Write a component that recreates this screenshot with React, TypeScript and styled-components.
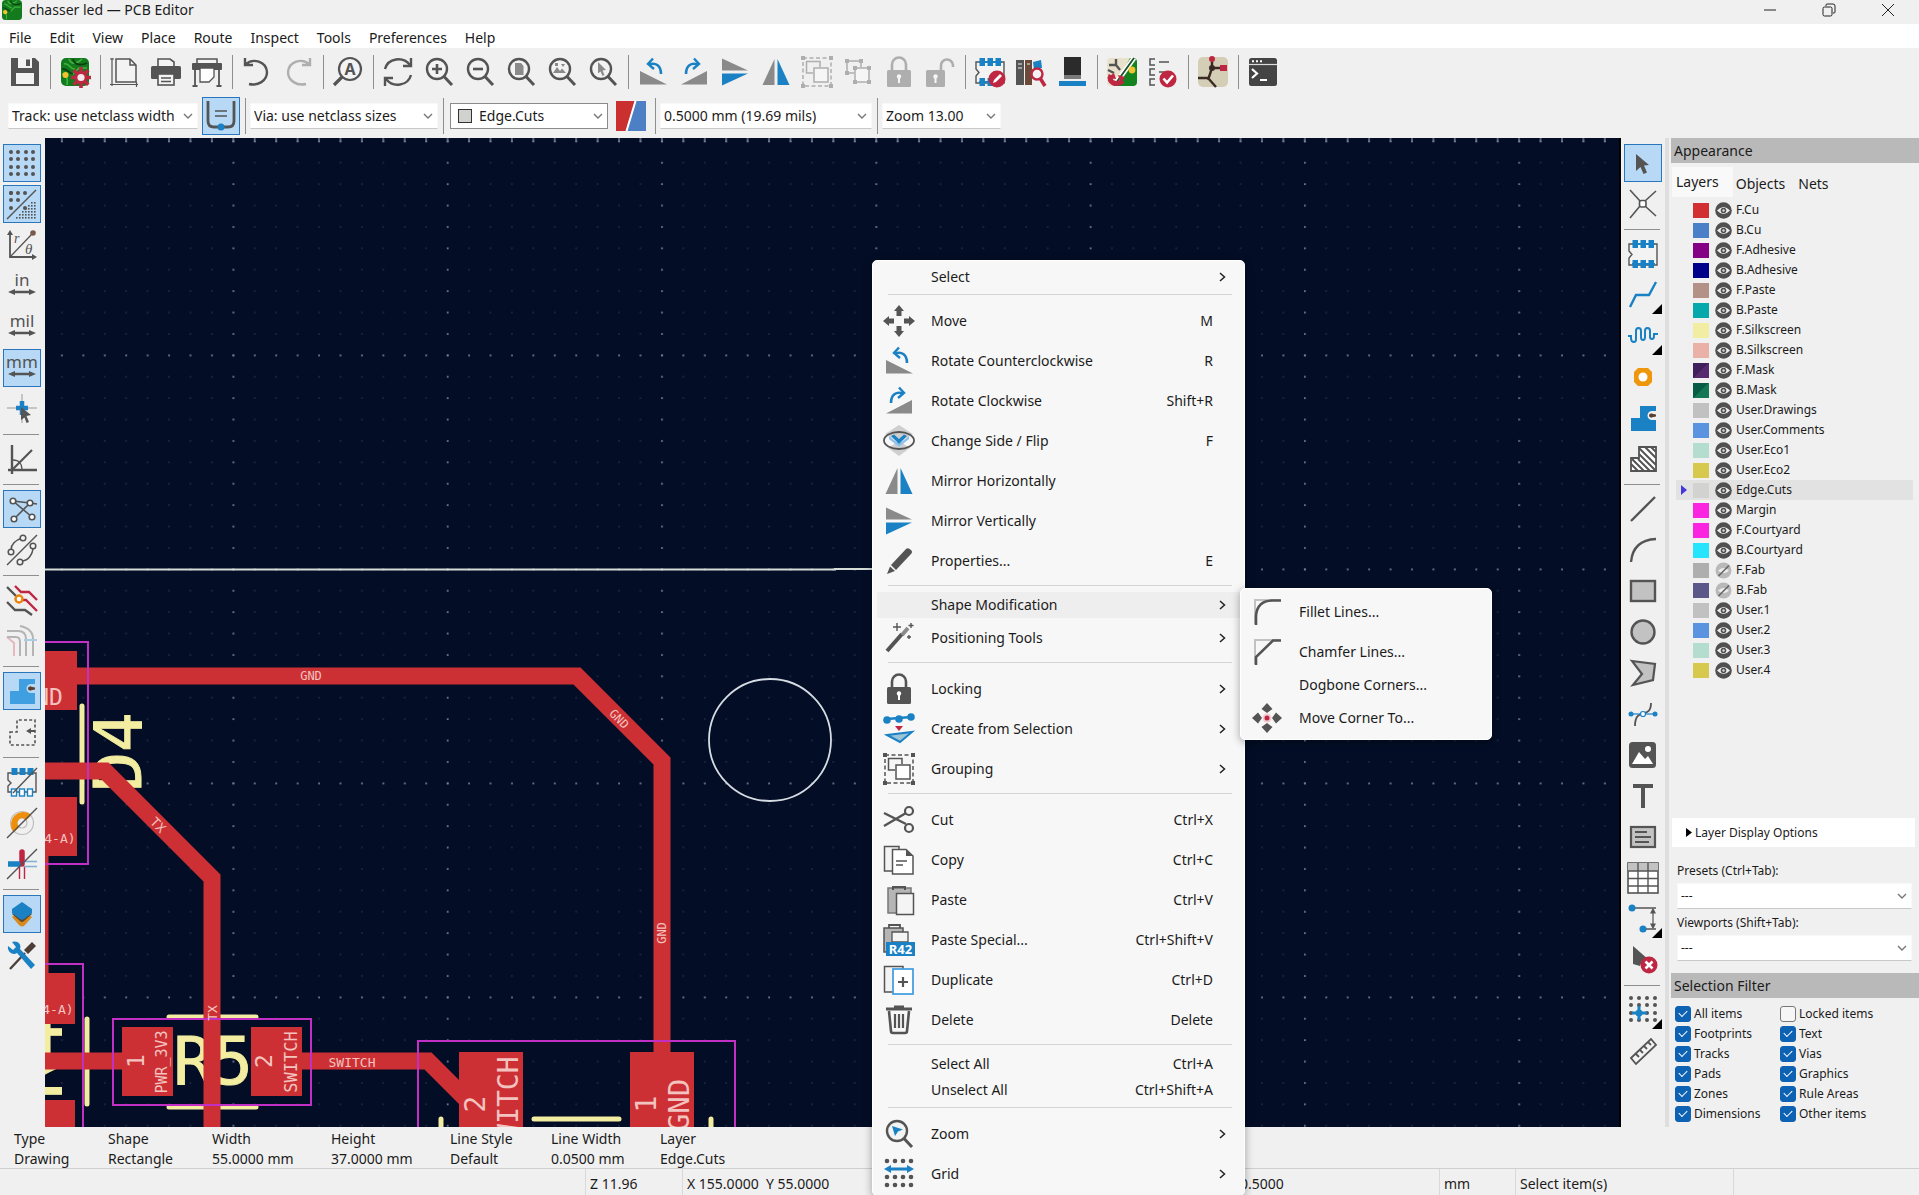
import React from "react";
import styled, { createGlobalStyle, css } from "styled-components";

const INK = "#545454";
const BLUE = "#1a81c4";
const RED = "#bf2641";
const PALE = "#f3f3f3";
const COPPER = "#cd3034";
const SILK = "#f2eda1";

const GlobalStyle = createGlobalStyle`
  *, *::before, *::after { box-sizing: border-box; }
  body { margin: 0; background: #f0f0f0; }
  button, select, input { font: inherit; color: inherit; margin: 0; }
  ul { list-style: none; margin: 0; padding: 0; }
`;

/* ---------- icons ---------- */

const lens = (inner: React.ReactNode) => (
  <g>
    <circle cx="14" cy="13" r="10" fill={PALE} stroke={INK} strokeWidth="2.4" />
    <path d="M21 20.5 L29 29" stroke={INK} strokeWidth="3" />
    {inner}
  </g>
);

const footprintBody = (
  <g>
    <path d="M2 6 H30 V27 H2 V20 L5 16.500 L2 13 Z" fill={PALE} stroke={INK} strokeWidth="1.4" />
    {[5.5, 13.5, 21.5].map((x) => (
      <g key={x} fill={BLUE}>
        <rect x={x} y="2" width="5.500" height="8" />
        <rect x={x} y="22" width="5.500" height="8" />
      </g>
    ))}
    <path d="M5 6 H28 M5 26 H28" stroke={BLUE} strokeWidth="2" />
  </g>
);

const padlock = (open: boolean) => (
  <g>
    <path
      d={open ? "M17 16 V10 a6 6 0 0 1 12 -1 v2" : "M9 16 V8.500 a7 7 0 0 1 14 0 V16"}
      fill="none"
      stroke={INK}
      strokeWidth="2.6"
    />
    <rect x={open ? 2 : 4} y="14" width={open ? 19 : 24} height="17" rx="1.500" fill={INK} />
    <circle cx={open ? 11.5 : 16} cy="20.500" r="2.200" fill="#fff" />
    <rect x={open ? 10.5 : 15} y="22" width="2" height="5" fill="#fff" />
  </g>
);

const cross4 = (
  <path
    d="M16 0 L21 6 H18.500 V11 H13.500 V6 H11 Z M16 32 L21 26 H18.500 V21 H13.500 V26 H11 Z M0 16 L6 11 V13.500 H11 V18.500 H6 V21 Z M32 16 L26 11 V13.500 H21 V18.500 H26 V21 Z"
    fill={INK}
  />
);

const dotGrid = (xs: number[], ys: number[], r = 2) =>
  ys.flatMap((y) => xs.map((x) => <circle key={`${x}-${y}`} cx={x} cy={y} r={r} fill={INK} />));

const doubleArrow = <path d="M2 22 L9 19 V20.800 H23 V19 L30 22 L23 25 V23.200 H9 V25 Z" fill={INK} />;

const unitIcon = (unit: string) => (
  <g>
    <text x="16" y="16" textAnchor="middle" fontFamily="Noto Sans, sans-serif" fontSize="17" fill={INK}>
      {unit}
    </text>
    {doubleArrow}
  </g>
);

const zoneShape = (fill: string) => (
  <g>
    <path d="M4 16 H13 V4 H29 V9 H25 a4.500 4.500 0 1 0 0 9 H29 V29 H4 Z" fill={fill} />
    <path d="M24 11.500 L29 12.500 V14.500 L24 15.500 Z" fill="#5b4030" />
    <circle cx="24" cy="13.500" r="2" fill="#5b4030" />
  </g>
);

const pagePair = (stroke: string) => (
  <g strokeWidth="1.500">
    <path d="M1.500 2.500 H16 V27 H1.500 Z" fill={PALE} stroke={INK} />
    <path d="M9.500 5.500 H23 L30 12 V30 H9.500 Z" fill="#fff" stroke={stroke} />
  </g>
);

const groupIcon = (
  <g fill="none" stroke={INK} strokeWidth="1.500">
    <path d="M2 2 H30 V30 H2 Z" strokeDasharray="4 2.500" />
    <path d="M12 17 H5.500 V5.500 H19 V11" />
    <rect x="13" y="12" width="14" height="14" fill="#fff" />
    {[0, 28].map((x) => [0, 28].map((y) => <rect key={`${x}${y}`} x={x} y={y} width="4" height="4" fill={INK} stroke="none" />))}
  </g>
);

const pcbTile = (
  <g>
    <rect x="2" y="2" width="28" height="28" rx="5" fill="#137a1d" />
    <path d="M5 8 C10 6 11 14 16 13 M10 3 C12 9 18 8 23 3 M3 18 C8 18 9 24 8 29 M13 19 L20 12 L28 12" fill="none" stroke="#3fb53c" strokeWidth="1.600" />
    <path d="M14 3 C15 9 22 10 28 7 M3 13 C8 12 11 18 14 18" fill="none" stroke="#0c3d12" strokeWidth="1.600" />
    <circle cx="6.500" cy="19" r="3" fill="#f2c230" />
  </g>
);

const ICONS: Record<string, React.ReactNode> = {
  save: (
    <g>
      <path d="M2 2 H26 L30 6 V30 H2 Z" fill={INK} />
      <rect x="9" y="2" width="14" height="10" fill={PALE} />
      <rect x="17" y="3.500" width="4" height="6.500" fill={INK} />
      <rect x="7" y="17" width="18" height="11" fill={PALE} />
    </g>
  ),
  board: (
    <g>
      {pcbTile}
      <path
        d="M22 11 V32 M12 21.500 H32 M14.700 14.200 L29.300 28.800 M29.300 14.200 L14.700 28.800"
        stroke={RED}
        strokeWidth="3.600"
      />
      <circle cx="22" cy="21.500" r="6.500" fill={RED} />
      <circle cx="22" cy="21.500" r="3.600" fill="#f4e8ea" />
    </g>
  ),
  page: (
    <g>
      <path d="M7 3 H21 L27 9 V26 H7 Z" fill={PALE} stroke={INK} strokeWidth="1.500" />
      <path d="M21 3 V9 H27" fill="none" stroke={INK} strokeWidth="1.500" />
      <path d="M3 2 V30 M1 28.500 H29 M1 3 H5 M27.500 26 V31" stroke={INK} strokeWidth="1.200" />
    </g>
  ),
  print: (
    <g>
      <path d="M8 10 V3 H20 L24 6 V10" fill={PALE} stroke={INK} strokeWidth="1.600" />
      <rect x="1" y="10" width="30" height="13" rx="1.500" fill={INK} />
      <rect x="8" y="18" width="16" height="11" fill={PALE} stroke={INK} strokeWidth="1.600" />
      <path d="M11 22 H21 M11 25.500 H21" stroke={INK} strokeWidth="1.300" />
    </g>
  ),
  plot: (
    <g>
      <path d="M6 8 V3 H26 V8" fill={PALE} stroke={INK} strokeWidth="1.500" />
      <rect x="1" y="7" width="30" height="7" rx="1" fill={INK} />
      <path d="M4 14 V30 M28 14 V30 M1.500 30 H6.500 M25.500 30 H30.500" stroke={INK} strokeWidth="1.800" />
      <path d="M9 12 H23 V21 L18 26 H9 Z" fill="#fff" stroke={INK} strokeWidth="1.300" />
    </g>
  ),
  undo: (
    <path d="M4 2 V9 H12 M5 8 C12 2 25 5 26 16 C26 25 17 30 8 28" fill="none" stroke={INK} strokeWidth="2.400" />
  ),
  redo: (
    <path d="M28 2 V9 H20 M27 8 C20 2 7 5 6 16 C6 25 15 30 24 28" fill="none" stroke={INK} strokeWidth="2.400" />
  ),
  find: (
    <g>
      <circle cx="18" cy="13" r="11" fill={PALE} stroke={INK} strokeWidth="2.200" />
      <path d="M10 21 L2 29" stroke={INK} strokeWidth="3.200" />
      <text x="18" y="19" textAnchor="middle" fontFamily="Noto Sans, sans-serif" fontWeight="700" fontSize="16" fill={INK}>
        A
      </text>
    </g>
  ),
  refresh: (
    <g fill="none" stroke={INK} strokeWidth="2.400">
      <path d="M3 13 C6 2 21 0 28 9" />
      <path d="M29 2 V10 H21" />
      <path d="M29 19 C26 30 11 32 4 23" />
      <path d="M3 30 V22 H11" />
    </g>
  ),
  zoomIn: lens(<path d="M9 13 H19 M14 8 V18" stroke={INK} strokeWidth="2.600" />),
  zoomOut: lens(<path d="M9 13 H19" stroke={INK} strokeWidth="2.600" />),
  zoomPage: lens(<path d="M10 7 H16 L18.500 10 V19 H10 Z" fill="#8a8a8a" />),
  zoomObjects: lens(<path d="M7 17 L11 11 L14 15 L16 12.500 L20 17 Z M9 7 h3 v3 h-3 Z M15 8 l4 0 l-2 3 Z" fill="#8a8a8a" />),
  zoomSelection: lens(<path d="M11 6 L19 14 L15.500 14.500 L17.500 19 L15.500 20 L13.500 15.500 L11 17.500 Z" fill="#8a8a8a" />),
  zoomMenu: lens(<path d="M9 8 L20 11.500 L15 13.500 L12 18 Z" fill={BLUE} />),
  rotateCcw: (
    <g>
      <path d="M3 15 L30 28.500 H3 Z" fill="#8a8a8a" />
      <path d="M12 8.500 C19 6 24 10 24 18" fill="none" stroke={BLUE} strokeWidth="2.600" />
      <path d="M16 2.500 L11 8 L17 13" fill="none" stroke={BLUE} strokeWidth="2.400" />
    </g>
  ),
  rotateCw: (
    <g>
      <path d="M29 15 L3 28.500 H29 Z" fill="#8a8a8a" />
      <path d="M20 8.500 C13 6 8 10 8 18" fill="none" stroke={BLUE} strokeWidth="2.600" />
      <path d="M16 2.500 L21 8 L15 13" fill="none" stroke={BLUE} strokeWidth="2.400" />
    </g>
  ),
  mirrorV: (
    <g>
      <path d="M3 2.500 L29 14.500 H3 Z" fill="#8a8a8a" />
      <path d="M3 17.500 H29 L3 29.500 Z" fill={BLUE} />
    </g>
  ),
  mirrorH: (
    <g>
      <path d="M14.500 3 V29 H2.500 Z" fill="#8a8a8a" />
      <path d="M17.500 3 V29 H29.500 Z" fill={BLUE} />
    </g>
  ),
  group: groupIcon,
  ungroup: (
    <g fill="none" stroke={INK} strokeWidth="1.500">
      <path d="M12 17 H5 V5 H19 V11" />
      <rect x="13" y="12" width="14" height="14" fill="#fff" />
      {[[3, 3], [17, 3], [3, 15], [11, 10], [25, 10], [11, 24], [25, 24]].map(([x, y]) => (
        <rect key={`${x}${y}`} x={x} y={y} width="4" height="4" fill={INK} stroke="none" />
      ))}
    </g>
  ),
  lock: padlock(false),
  unlock: padlock(true),
  footprintEdit: (
    <g>
      {footprintBody}
      <circle cx="23" cy="23" r="8.500" fill={RED} />
      <path d="M19 27 L20 24 L26 18 L28 20 L22 26 Z" fill="#fff" />
    </g>
  ),
  library: (
    <g>
      <rect x="1" y="4" width="8" height="25" fill={INK} />
      <rect x="10" y="4" width="7" height="25" fill="#6b4a3a" />
      <path d="M3 8 H7 M12 8 H15 M3 12 H7" stroke="#bbb" strokeWidth="1.500" />
      <path d="M18 6 L26 4 L27 12 L19 14 Z" fill={BLUE} />
      <circle cx="22" cy="18" r="5.500" fill={PALE} stroke={RED} strokeWidth="2.400" />
      <path d="M25 22 L30 30" stroke={RED} strokeWidth="3.500" />
    </g>
  ),
  viewer3d: (
    <g>
      <rect x="8" y="1" width="17" height="22" fill="#2b2b2b" />
      <rect x="8" y="19" width="17" height="4" fill="#7a7a7a" />
      <rect x="3" y="25" width="27" height="5" fill={BLUE} />
    </g>
  ),
  updateBoard: (
    <g>
      <rect x="1" y="2" width="30" height="28" rx="4" fill="#e8e2cc" />
      <path d="M24 2 H27 a4 4 0 0 1 4 4 V26 a4 4 0 0 1 -4 4 H9 Z" fill="#13831f" />
      <path d="M3 9 H10 V3 M10 9 L14 14 M2 14 L8 17" stroke={INK} strokeWidth="2.400" fill="none" />
      <path d="M28 2 L10 27" stroke="#fff" strokeWidth="5" />
      <path d="M28 2 L10 27" stroke="#1b4f25" strokeWidth="1.800" />
      <circle cx="26" cy="14" r="3.400" fill="#f2c230" />
      <path d="M5 19 C2 27 10 30 17 25" fill="none" stroke={RED} strokeWidth="5" />
      <path d="M12 19 L19 21 L15 28 Z M1 22 L8 17 L10 23 Z" fill={RED} />
    </g>
  ),
  drc: (
    <g>
      <path d="M8 3 H3 V9 H8 M8 13 H3 V19 H8 M8 23 H3 V29 H8" fill="none" stroke={INK} strokeWidth="1.500" />
      <path d="M12 6 H22 M12 16 H17" stroke={INK} strokeWidth="1.600" />
      <circle cx="21" cy="23" r="8.500" fill={RED} />
      <path d="M16.500 22.500 L20 26.500 L26 19.500" fill="none" stroke="#fff" strokeWidth="2.600" />
    </g>
  ),
  schematic: (
    <g>
      <rect x="1" y="1" width="30" height="30" rx="5" fill="#d3ceb5" />
      <path d="M15 1 V12 M15 12 H30 M15 12 L11 24 M1 22 H11 M11 22 L19 31" fill="none" stroke="#3a2a26" strokeWidth="2.400" />
      <circle cx="15" cy="12" r="3" fill="#3a2a26" />
      <circle cx="15" cy="3" r="3" fill={RED} />
      <rect x="23" y="9" width="7" height="6" fill={RED} />
    </g>
  ),
  console: (
    <g>
      <rect x="2" y="2" width="28" height="28" rx="2.500" fill="#444" />
      <path d="M2 8.500 H30" stroke="#ddd" strokeWidth="1.200" />
      <path d="M5 5.300 H7 M9 5.300 H11 M13 5.300 H15" stroke="#fff" strokeWidth="2" />
      <path d="M5 13 L10 17.500 L5 22 M13 24 H20" fill="none" stroke="#fff" strokeWidth="2.200" />
    </g>
  ),
  autoWidth: (
    <g>
      <path d="M3 1 V21 Q3 27 9 27 H23 Q29 27 29 21 V1" fill="none" stroke={INK} strokeWidth="2.800" />
      <path d="M10 11 H22 M10 16 H22" stroke={INK} strokeWidth="1.500" />
      <circle cx="16" cy="27" r="3.500" fill={BLUE} />
    </g>
  ),
  layerPair: (
    <g>
      <path d="M1 1 H20 L11 31 H1 Z" fill="#c9302f" />
      <path d="M21 1 H31 V31 H12 Z" fill="#4d7fc4" />
      <path d="M20.500 1 L11.500 31" stroke="#fff" strokeWidth="2" />
    </g>
  ),
  gridDots: <g>{dotGrid([5, 12, 20, 27], [5, 12, 20, 27])}</g>,
  gridOverride: (
    <g>
      {dotGrid([5, 12], [5, 12])}
      {dotGrid([19, 5], [5, 20])}
      <path d="M1 31 L30 2" stroke={INK} strokeWidth="1.400" />
      {[30, 27, 24, 21, 18, 15].map((y, row) =>
        [29, 26, 23, 20, 17, 14, 11].slice(0, 7 - row).map((x) => <rect key={`${x}-${y}`} x={x - 1} y={y - 1} width="1.600" height="1.600" fill={INK} />)
      )}
    </g>
  ),
  polar: (
    <g>
      <path d="M4 4 V28 H29" fill="none" stroke={INK} strokeWidth="1.800" />
      <path d="M4 1 L7 6 H1 Z M31 28 L26 25 V31 Z" fill={INK} />
      <path d="M4 28 L26 5" stroke={INK} strokeWidth="1.300" />
      <circle cx="27" cy="4" r="2.800" fill="#7a5a4c" />
      <text x="8" y="14" fontFamily="Liberation Serif, serif" fontSize="14" fontStyle="italic" fill={INK}>r</text>
      <text x="19" y="25" fontFamily="Liberation Serif, serif" fontSize="15" fontStyle="italic" fill={INK}>θ</text>
    </g>
  ),
  unitIn: unitIcon("in"),
  unitMil: unitIcon("mil"),
  unitMm: unitIcon("mm"),
  cursorCross: (
    <g>
      <path d="M1 15 H31 M16 1 V30" stroke="#9a9a9a" strokeWidth="1" />
      <path d="M10 15 H22 M16 8 V22" stroke={BLUE} strokeWidth="4.500" />
      <path d="M15 14 L25 22 L20.500 23 L23 29 L20.500 30 L18.500 24.500 L15 27 Z" fill={INK} />
    </g>
  ),
  angle: (
    <g fill="none" stroke={INK}>
      <path d="M6 2 V31 M2 27 H31" strokeWidth="2.400" />
      <path d="M6 27 L26 7" strokeWidth="2.200" />
      <path d="M7 17 C13 17 16 21 16 26" strokeWidth="1.400" />
    </g>
  ),
  ratsnest: (
    <g stroke={INK} strokeWidth="1.600">
      <path d="M7 8 L26 24 M8 26 L24 10 M7 8 L24 10 L31 11" fill="none" />
      {[[7, 8], [24, 10], [8, 26], [26, 24]].map(([x, y]) => <circle key={`${x}${y}`} cx={x} cy={y} r="2.800" fill="#fff" />)}
    </g>
  ),
  ratsnestCurved: (
    <g fill="none" stroke={INK} strokeWidth="1.500">
      <path d="M1 31 L31 1" />
      <path d="M5 16 C5 10 10 6 16 4 M14 27 C22 28 27 20 27 13" />
      {[[5, 18], [17, 4], [14, 28], [27, 12]].map(([x, y]) => <circle key={`${x}${y}`} cx={x} cy={y} r="2.800" fill={PALE} />)}
    </g>
  ),
  netColors: (
    <g fill="none" strokeWidth="2.400">
      <path d="M1 3 L10 12 M1 18 L9 26 H19 L26 31" stroke={INK} />
      <path d="M9 2 L15 8 H23 L31 16" stroke={RED} />
      <path d="M15 16 H20 L31 27" stroke={RED} />
      <circle cx="13" cy="15" r="3.500" fill="#fff" stroke="#e8870e" />
    </g>
  ),
  contrast: (
    <g fill="none" strokeWidth="2" stroke="#b4b4b4">
      <path d="M1 6 H12 C18 6 20 9 20 14 V31 M14 1 C24 3 27 8 27 14 V31" />
      <path d="M8 31 V18 L1 12" stroke="#e6b8c0" />
      <path d="M1 12 H10 C13 12 14 14 14 17 V31" />
      <path d="M18 15 H31" stroke="#a9cde4" />
    </g>
  ),
  zoneFilled: zoneShape("#3f9fe0"),
  zoneSolid: zoneShape(BLUE),
  zoneOutline: (
    <g>
      <path d="M4 16 H11 V4 H29 V29 H4 Z" fill="none" stroke={INK} strokeWidth="1.600" strokeDasharray="3 2.200" />
      <path d="M20 15 L25 12 V14 H29 V16 H25 V18 Z" fill={INK} />
    </g>
  ),
  padOutline: (
    <g>
      <path d="M2 7 H30 V26 H2 V20 L5 17 L2 14 Z" fill="none" stroke={INK} strokeWidth="1.400" />
      {[5.5, 13.5, 21.5].map((x) => (
        <g key={x}>
          <rect x={x} y="2" width="6" height="7" fill={BLUE} />
          <rect x={x} y="23" width="5" height="7" fill="#fff" stroke={BLUE} strokeWidth="1.400" />
        </g>
      ))}
      <path d="M7 27 L31 2" stroke={INK} strokeWidth="1.400" />
    </g>
  ),
  viaOutline: (
    <g>
      <circle cx="16" cy="16" r="11.500" fill="none" stroke="#bdbdbd" strokeWidth="1.200" />
      <circle cx="16" cy="16" r="5" fill="none" stroke="#bdbdbd" strokeWidth="1.200" />
      <path d="M8 24 A11.500 11.500 0 0 1 24 8 L20 12 A5.500 5.500 0 0 0 12 20 Z" fill="#ee8f0c" stroke="#ee8f0c" strokeWidth="2" />
      <path d="M1 31 L31 1" stroke={INK} strokeWidth="1.400" />
    </g>
  ),
  trackOutline: (
    <g>
      <path d="M16 4 V16" stroke={RED} strokeWidth="5.500" strokeLinecap="round" />
      <path d="M2 16 H14" stroke={BLUE} strokeWidth="5.500" />
      <path d="M13.500 18 V31 M18.500 18 V31" stroke={RED} strokeWidth="1.400" />
      <path d="M18 13.500 H31 M18 18.500 H31" stroke="#7fb0d0" strokeWidth="1.400" />
      <path d="M1 31 L31 1" stroke={INK} strokeWidth="1.400" />
    </g>
  ),
  layers: (
    <g>
      <path d="M16 12 L26 19 L19 27 Q16 30 13 27 L6 19 Z" fill="#d98a1c" />
      <path d="M16 9 L26 16 L18 23 Q16 25 14 23 L6 16 Z" fill="#5b4a30" />
      <path d="M16 4 L26 11 V15 L18 21 Q16 22.500 14 21 L6 15 V11 Z" fill={BLUE} />
    </g>
  ),
  tools: (
    <g>
      <path d="M4 30 L19 14" stroke="#4a4038" strokeWidth="2.400" />
      <path d="M18 11 L26 3 L30 7 L22 15 Z" fill="#4e3c36" />
      <path d="M2 7 L7 11 L10 8 L6 3 C11 1 16 5 14 10 L29 26 L25 30 L11 14 C6 17 1 12 2 7 Z" fill={BLUE} />
    </g>
  ),
  arrow: <path d="M9 7 L22 18 L17 18.500 L20 25.500 L16.500 27 L13.500 20 L9 24 Z" fill={INK} />,
  localRats: (
    <g stroke={INK} strokeWidth="1.600">
      <path d="M3 2 L13 13 M29 3 L18 13 M3 30 L13 18 M29 28 L18 18" />
      <rect x="12.500" y="12.500" width="6.500" height="6.500" rx="2" fill="#fff" />
    </g>
  ),
  footprint: footprintBody,
  route: <path d="M3 28 L9 16 H22 L29 3" fill="none" stroke={BLUE} strokeWidth="2.400" />,
  meander: (
    <path d="M1 16 H4 V18 Q4 22 7 22 Q9 22 9 19 V11 Q9 8 11.500 8 Q14 8 14 11 V17 Q14 20 16 20 Q18 20 18 17 V11 Q18 8 20.500 8 Q23 8 23 11 V17 Q23 19 25 19 Q27 19 27 16 V14 H31" fill="none" stroke={BLUE} strokeWidth="2" />
  ),
  via: (
    <g>
      <path d="M11 7 H21 L25 11 V21 L21 25 H11 L7 21 V11 Z" fill="#ee970c" />
      <circle cx="16" cy="16" r="4.500" fill="#fff" />
    </g>
  ),
  hatch: (
    <g>
      <path d="M4 15 H12 V4 H29 V28 H4 Z" fill="#fff" stroke={INK} strokeWidth="1.800" />
      <path d="M12 5 L29 22 M12 11 L28 27 M11 16 L23 28 M5 16 L17 28 M18 4 L29 15 M24 4 L29 9 M4 21 L11 28" stroke={INK} strokeWidth="2" />
    </g>
  ),
  line: <path d="M4 28 L28 4" stroke={INK} strokeWidth="2.400" />,
  arc: <path d="M4 28 Q6 6 29 5" fill="none" stroke={INK} strokeWidth="2.400" />,
  rect: <rect x="4" y="6" width="24" height="20" fill="#c2c2c2" stroke={INK} strokeWidth="2.400" />,
  circle: <circle cx="16" cy="16" r="11.500" fill="#c2c2c2" stroke={INK} strokeWidth="2.400" />,
  polygon: <path d="M5 4 L28 7 L26 23 L6 28 L15 17 Z" fill="#c2c2c2" stroke={INK} strokeWidth="2.200" />,
  bezier: (
    <g>
      <path d="M8 28 C8 8 24 22 24 5" fill="none" stroke={INK} strokeWidth="1.800" />
      <path d="M4 16 H28" stroke={BLUE} strokeWidth="1.200" />
      <circle cx="4" cy="16" r="2.500" fill={BLUE} />
      <circle cx="28" cy="16" r="2.500" fill={BLUE} />
      <circle cx="16" cy="16" r="2.500" fill="#fff" stroke={BLUE} strokeWidth="1.200" />
    </g>
  ),
  image: (
    <g>
      <rect x="2" y="3" width="27" height="26" rx="3.500" fill={INK} />
      <path d="M5 25 L12 13 L18 20 L21 17 L26 25 Z" fill="#fff" />
      <circle cx="21" cy="10" r="3" fill="#fff" />
    </g>
  ),
  text: <path d="M6 4 H26 V8 H18 V28 H14 V8 H6 Z" fill={INK} />,
  textbox: (
    <g>
      <rect x="4" y="6" width="24" height="20" fill="#c2c2c2" stroke={INK} strokeWidth="2.200" />
      <path d="M8 11 H20 M8 16 H24 M8 21 H22" stroke={INK} strokeWidth="1.800" />
    </g>
  ),
  table: (
    <g>
      <rect x="1" y="1" width="30" height="30" fill="#fff" stroke={INK} strokeWidth="1.600" />
      <rect x="1" y="1" width="30" height="8" fill="#c2c2c2" />
      <path d="M1 9 H31 M1 16.500 H31 M1 24 H31 M11 1 V31 M21 1 V31" stroke={INK} strokeWidth="1.400" />
    </g>
  ),
  dimension: (
    <g>
      <path d="M5 5 H29 M16 26 H29" stroke={INK} strokeWidth="1.400" />
      <path d="M26 6 V25 M26 6 l-2 4 h4 Z M26 25 l-2 -4 h4 Z" stroke={INK} fill={INK} strokeWidth="1.200" />
      <circle cx="5" cy="5" r="3.500" fill={BLUE} />
      <circle cx="16" cy="26" r="3.500" fill={BLUE} />
    </g>
  ),
  deleteTool: (
    <g>
      <path d="M6 2 L22 16 L15 17 L13 22 L6 20 Z" fill={INK} />
      <circle cx="22" cy="21" r="8.500" fill={RED} />
      <path d="M18.500 17.500 L25.500 24.500 M25.500 17.500 L18.500 24.500" stroke="#fff" strokeWidth="2.600" />
    </g>
  ),
  gridOrigin: (
    <g>
      {dotGrid([4, 12, 20, 28], [4, 11, 19, 26], 2)}
      <path d="M5 19 H20 M12 12 V26" stroke={BLUE} strokeWidth="3" />
      <circle cx="12" cy="19" r="3.500" fill={BLUE} />
    </g>
  ),
  ruler: (
    <path d="M4 23 L24 4 L29 10 L9 29 Z M9 19 l3 3 M13 15 l3 3 M17 11 l3 3 M21 7 l3 3" fill={PALE} stroke={INK} strokeWidth="1.800" />
  ),
  move: cross4,
  moveCorner: (
    <g>
      <path d="M16 1 L21.500 7 L16 11 L10.500 7 Z M16 31 L21.500 25 L16 21 L10.500 25 Z M1 16 L7 10.500 L11 16 L7 21.500 Z M31 16 L25 10.500 L21 16 L25 21.500 Z" fill={INK} />
      <circle cx="16" cy="16" r="4.500" fill="#f3ccd4" />
      <circle cx="16" cy="16" r="2.500" fill={RED} />
    </g>
  ),
  flip: (
    <g>
      <path d="M16 0 L30 9 L16 17 L2 9 Z" fill="#cfcfcf" />
      <path d="M16 16 L27 23 L16 31 L5 23 Z" fill="#cfcfcf" />
      <ellipse cx="16" cy="15.500" rx="15" ry="8.500" fill="none" stroke={INK} strokeWidth="1.800" />
      <path d="M6 11 L16 19 L26 11 V14 L16 22 L6 14 Z" fill="#8fc0ea" />
      <path d="M8 11 L11 9.500 L16 14 L21 9.500 L24 11 L16 19 Z" fill={BLUE} />
    </g>
  ),
  pencil: (
    <g>
      <path d="M8 20 L23 4 Q25 2 28 5 Q30 7 28 9 L13 25 Z" fill={INK} />
      <path d="M7 21.500 L12 26 L4 29 Z" fill={INK} />
    </g>
  ),
  wand: (
    <g>
      <path d="M4 29 L19 12" stroke={INK} strokeWidth="4" />
      <path d="M19 13 L25 6" stroke="#8a8a8a" strokeWidth="4" />
      <path d="M14 1 V9 M10 5 H18 M28 1 V6 M25.500 3.500 H30.500 M26 13 V17 M24 15 H28" stroke={INK} strokeWidth="1.400" />
    </g>
  ),
  create: (
    <g>
      <path d="M4 6 L16 5 L28 4" stroke={BLUE} strokeWidth="2.400" />
      {[[4, 7], [16, 6], [28, 4]].map(([x, y]) => <circle key={x} cx={x} cy={y} r="3.800" fill={BLUE} />)}
      <path d="M12 13 H20 L16 18 Z" fill={RED} />
      <path d="M4 22 L29 19 L17 29 Z" fill="#9cc4d8" stroke={BLUE} strokeWidth="2" />
    </g>
  ),
  cut: (
    <g fill="none" stroke={INK}>
      <path d="M1 9 L23 20 M1 22 L23 9" strokeWidth="2.400" />
      <circle cx="26" cy="7" r="4" strokeWidth="2.200" />
      <circle cx="26" cy="24" r="4" strokeWidth="2.200" />
    </g>
  ),
  copy: (
    <g>
      {pagePair(INK)}
      <path d="M23 5 L30 12 H23 Z" fill={INK} />
      <path d="M13 17 H24 M13 21 H20" stroke={INK} strokeWidth="1.500" />
    </g>
  ),
  paste: (
    <g>
      <rect x="5" y="4" width="23" height="25" fill="#b5b5b5" stroke="#777" strokeWidth="1.500" />
      <path d="M10 6 V3 H22 V6" fill="none" stroke={INK} strokeWidth="2" />
      <rect x="13.500" y="9.500" width="17" height="21" fill="#f4f4f4" stroke={INK} strokeWidth="1.500" />
    </g>
  ),
  pasteSpecial: (
    <g>
      <path d="M1 4 H20 V28 H1 Z" fill="#b5b5b5" stroke={INK} strokeWidth="1.500" />
      <path d="M6 4 V1 H17 V4" fill="none" stroke={INK} strokeWidth="1.800" />
      <path d="M9 8 H25 V18 H9 Z" fill="#f4f4f4" stroke={INK} strokeWidth="1.300" />
      <rect x="3" y="18" width="29" height="14" fill={BLUE} />
      <text x="17.500" y="29.500" textAnchor="middle" fontFamily="Noto Sans, sans-serif" fontWeight="700" fontSize="13" fill="#fff">R42</text>
    </g>
  ),
  duplicate: (
    <g>
      <path d="M1.500 2.500 H20 V28 H1.500 Z" fill={PALE} stroke={INK} strokeWidth="1.500" />
      <rect x="10" y="5" width="20" height="25" fill="#fff" stroke="#3d9be0" strokeWidth="1.700" />
      <path d="M15 18 H25 M20 13 V23" stroke={INK} strokeWidth="2.200" />
    </g>
  ),
  trash: (
    <g fill="none" stroke={INK}>
      <path d="M3 5 H29" strokeWidth="3" />
      <path d="M11 3 H21" strokeWidth="3" />
      <path d="M6 7 L8 27 Q8 29 10 29 H22 Q24 29 24 27 L26 7" strokeWidth="2.600" />
      <path d="M12 10 V24 M16 10 V24 M20 10 V24" strokeWidth="2.200" />
    </g>
  ),
  gridMenu: (
    <g>
      {dotGrid([4, 12, 20, 28], [3, 19, 27], 2.3)}
      <path d="M1 11 L8 7 V9.500 H24 V7 L31 11 L24 15 V12.500 H8 V15 Z" fill={BLUE} />
    </g>
  ),
  fillet: (
    <g fill="none">
      <path d="M4 28 V4 H29" stroke="#c2c2c2" strokeWidth="2" />
      <path d="M5 29 V20 Q6 5 21 4.500 H30" stroke={INK} strokeWidth="2.600" />
    </g>
  ),
  chamfer: (
    <g fill="none">
      <path d="M4 28 V4 H29" stroke="#c2c2c2" strokeWidth="2" />
      <path d="M5 29 V21 L22 4.500 H30" stroke={INK} strokeWidth="2.600" />
    </g>
  ),
};

const IconSvg = styled.svg`
  display: block;
  width: 38px;
  height: 38px;
  flex: none;
`;

const Icon = ({ name, flyout }: { name: string; flyout?: boolean }) => (
  <IconSvg viewBox="-3 -3 38 38" aria-hidden="true">
    {ICONS[name]}
    {flyout && <path d="M35 25 V35 H25 Z" fill="#000" />}
  </IconSvg>
);

/* ---------- window frame ---------- */

const Shell = styled.div`
  position: relative;
  display: flex;
  flex-direction: column;
  height: 100vh;
  overflow: hidden;
  background: #f0f0f0;
  color: #1b1b1b;
  font-family: "Noto Sans", "Open Sans", sans-serif;
  font-size: 14px;
  line-height: 20px;
`;

const TitleBar = styled.header`
  display: flex;
  align-items: flex-start;
  height: 24px;
  flex: none;
  padding-right: 2px;
`;

const AppLogo = styled.svg`
  width: 20px;
  height: 20px;
  margin: 0 7px 0 2px;
`;

const WindowTitle = styled.h1`
  flex: 1;
  margin: 0;
  font-size: 14px;
  font-weight: 400;
`;

const WindowButton = styled.button`
  display: grid;
  place-items: center;
  width: 59px;
  height: 20px;
  padding: 0;
  border: 0;
  background: none;

  svg {
    width: 16px;
    height: 16px;
    fill: none;
    stroke: #222;
  }
`;

const MenuBar = styled.nav`
  display: flex;
  align-items: center;
  height: 24px;
  flex: none;
  background: #fff;
`;

const MenuBarItem = styled.button`
  padding: 4px 9px 0;
  border: 0;
  background: none;
  line-height: 20px;
`;

const Toolbar = styled.div`
  display: flex;
  align-items: center;
  gap: 3px;
  height: 48px;
  flex: none;
  padding-left: 6px;
`;

const OptionsBar = styled.div`
  display: flex;
  align-items: center;
  gap: 4px;
  height: 42px;
  flex: none;
  padding: 0 8px 2px;
`;

const ToolButton = styled.button<{ $active?: boolean }>`
  display: grid;
  place-items: center;
  width: 38px;
  height: 38px;
  flex: none;
  padding: 0;
  border: 0;
  background: none;
  ${(p) =>
    p.$active &&
    css`
      background: #b7d9f5;
      box-shadow: inset 0 0 0 1px #2a76bd;
    `}

  &:disabled {
    opacity: 0.42;
  }
`;

const Divider = styled.span<{ $vertical?: boolean; $tight?: boolean }>`
  flex: none;
  ${(p) =>
    p.$vertical
      ? css`
          width: ${p.$tight ? "2px" : "6px"};
          height: ${p.$tight ? "36px" : "34px"};
          background: linear-gradient(#8e8e8e, #8e8e8e) center / 1px 100% no-repeat;
        `
      : css`
          height: 6px;
          width: 36px;
          background: linear-gradient(#8e8e8e, #8e8e8e) center / 100% 1px no-repeat;
        `}
`;

const SelectBox = styled.span<{ $width?: number; $framed?: boolean }>`
  display: grid;
  align-items: center;
  width: ${(p) => (p.$width ? `${p.$width}px` : "100%")};
  height: 26px;
  margin-left: ${(p) => (p.$framed ? "2px" : "0")};
  background: #fff;
  border: 1px solid ${(p) => (p.$framed ? "#8b8b8b" : "#f8f8f8")};
  border-bottom-color: ${(p) => (p.$framed ? "#8b8b8b" : "#c9c9c9")};

  > * {
    grid-area: 1 / 1;
  }
`;

const NativeSelect = styled.select<{ $indent?: boolean }>`
  appearance: none;
  width: 100%;
  height: 24px;
  padding: 0 20px 0 ${(p) => (p.$indent ? "28px" : "3px")};
  border: 0;
  background: transparent;
`;

const Chevron = styled.svg`
  justify-self: end;
  width: 10px;
  height: 6px;
  margin-right: 4px;
  fill: none;
  stroke: #777;
  stroke-width: 1.4;
  pointer-events: none;
`;

const Swatch = styled.span<{ $color: string; $framed?: boolean }>`
  width: ${(p) => (p.$framed ? "14px" : "16px")};
  height: ${(p) => (p.$framed ? "14px" : "15px")};
  flex: none;
  background: ${(p) => p.$color};
  ${(p) => p.$framed && "border: 1px solid #333; margin-left: 7px; pointer-events: none;"}
`;

type SelectProps = { label: string; value: string; width?: number; swatch?: string; framed?: boolean; id?: string };

const Select = ({ label, value, width, swatch, framed, id }: SelectProps) => (
  <SelectBox $width={width} $framed={framed}>
    <NativeSelect id={id} aria-label={label} $indent={!!swatch}>
      <option>{value}</option>
    </NativeSelect>
    {swatch && <Swatch $color={swatch} $framed />}
    <Chevron viewBox="0 0 10 6">
      <path d="M1 1 L5 5 L9 1" />
    </Chevron>
  </SelectBox>
);

/* ---------- work area ---------- */

const Workspace = styled.main`
  display: flex;
  flex: 1;
  min-height: 0;
`;

const SideBar = styled.div<{ $right?: boolean }>`
  display: flex;
  flex-direction: column;
  gap: 3px;
  width: ${(p) => (p.$right ? "48px" : "45px")};
  flex: none;
  padding: 6px 3px 0;
  ${(p) => p.$right && "border-right: 4px solid #dedede;"}
`;

const Canvas = styled.div`
  flex: 1;
  min-width: 0;
  overflow: hidden;
  background: #030d25;
  border-right: 2px solid #000;

  svg {
    display: block;
    width: 100%;
    height: 100%;
  }
`;

/* ---------- appearance panel ---------- */

const Panel = styled.aside`
  display: flex;
  flex-direction: column;
  width: 250px;
  flex: none;
`;

const PanelTitle = styled.h2<{ $spaced?: boolean }>`
  flex: none;
  margin: ${(p) => (p.$spaced ? "12px" : "0")} 0 0 2px;
  padding: 3px 3px 2px;
  background: #b9b9b9;
  font-size: 14px;
  line-height: 20px;
  font-weight: 400;
`;

const Tabs = styled.div`
  display: flex;
  height: 34px;
  flex: none;
  padding: 4px 0 0 3px;
`;

const Tab = styled.button<{ $selected?: boolean }>`
  padding: ${(p) => (p.$selected ? "2px 14px 2px 4px" : "6px 10px 2px 3px")};
  border: 0;
  background: ${(p) => (p.$selected ? "#f9f9f9" : "transparent")};
  line-height: 20px;
`;

const LayerList = styled.ul`
  flex: 1;
  min-height: 0;
  padding: 3px 6px 0 7px;
`;

const LayerRow = styled.li<{ $current?: boolean }>`
  display: flex;
  align-items: center;
  height: 20px;
  font-size: 12px;
  background: ${(p) => (p.$current ? "#e2e2e2" : "transparent")};
`;

const RowMarker = styled.span<{ $current?: boolean }>`
  width: 6px;
  height: 10px;
  margin: 0 6px 0 5px;
  flex: none;
  background: ${(p) => (p.$current ? "#4338dd" : "transparent")};
  clip-path: polygon(0 0, 100% 50%, 0 100%);
`;

const EyeButton = styled.button`
  padding: 0;
  margin: 0 4px 0 6px;
  border: 0;
  background: none;

  svg {
    display: block;
    width: 17px;
    height: 17px;
  }
`;

const Disclosure = styled.button`
  display: flex;
  align-items: center;
  gap: 3px;
  flex: none;
  height: 29px;
  margin: 0 4px 0 3px;
  padding: 0 14px;
  border: 0;
  background: #fff;
  font-size: 12px;

  &::before {
    content: "";
    width: 6px;
    height: 9px;
    background: #000;
    clip-path: polygon(0 0, 100% 50%, 0 100%);
  }
`;

const Presets = styled.div`
  display: flex;
  flex-direction: column;
  gap: 2px;
  padding: 14px 7px 0 8px;
  font-size: 12px;
`;

const FieldLabel = styled.label`
  &:not(:first-child) {
    margin-top: 2px;
  }
`;

const FilterGrid = styled.div`
  display: grid;
  grid-template-columns: 105px 1fr;
  flex: none;
  padding: 6px 0 3px 6px;
`;

const CheckLabel = styled.label`
  display: flex;
  align-items: center;
  gap: 3px;
  height: 20px;
  font-size: 12px;
`;

const Check = styled.input`
  appearance: none;
  display: grid;
  place-items: center;
  width: 16px;
  height: 16px;
  border: 1px solid #777;
  border-radius: 3px;
  background: #f6f6f6;

  &:checked {
    border-color: #0d62b3;
    background: #0d62b3;
  }

  &:checked::after {
    content: "";
    width: 8px;
    height: 5px;
    margin-bottom: 3px;
    border: solid #fff;
    border-width: 0 0 1px 1px;
    transform: rotate(-45deg);
  }
`;

/* ---------- bottom bars ---------- */

const MessageBar = styled.dl`
  display: grid;
  grid-template-columns: 94px 104px 119px 119px 101px 109px 1fr;
  flex: none;
  height: 41px;
  margin: 0;
  padding: 2px 0 0 14px;
  line-height: 20px;

  dt,
  dd {
    margin: 0;
  }
`;

const StatusBar = styled.footer`
  display: grid;
  grid-template-columns: 585px 97px 553px 204px 76px 218px 1fr;
  flex: none;
  height: 27px;
  border-top: 1px solid #cfcfcf;
`;

const StatusCell = styled.span<{ $lined?: boolean }>`
  padding: 5px 4px 0;
  border-left: ${(p) => (p.$lined ? "1px solid #d9d9d9" : "0")};
  white-space: pre;
`;

/* ---------- context menu ---------- */

const MenuSheet = styled.div<{ $left: number; $top: number; $width: number }>`
  position: absolute;
  left: ${(p) => p.$left}px;
  top: ${(p) => p.$top}px;
  width: ${(p) => p.$width}px;
  padding: 3px 4px 1px;
  border: 1px solid #fff;
  border-radius: 5px;
  background: #f7f7f7;
  box-shadow: 0 2px 8px rgba(0, 0, 0, 0.35);
`;

const MenuRow = styled.button<{ $icon?: boolean; $hot?: boolean }>`
  display: grid;
  grid-template-columns: 45px 1fr auto 7px;
  align-items: center;
  width: 100%;
  height: ${(p) => (p.$icon ? "40px" : "26px")};
  padding: 0 14px 0 3px;
  border: 0;
  background: ${(p) => (p.$hot ? "#eeeeee" : "transparent")};
  text-align: left;
  column-gap: 6px;
`;

const RowLabel = styled.span`
  grid-column: 2;
`;

const RowKeys = styled.span`
  grid-column: 3;
`;

const RowArrow = styled.svg`
  grid-column: 4;
  width: 7px;
  height: 10px;
  fill: none;
  stroke: #222;
  stroke-width: 1.5;
`;

const MenuLine = styled.hr`
  height: 1px;
  margin: 4px 8px 6px 11px;
  border: 0;
  background: #d4d4d4;
`;

type Entry = { label: string; icon?: string; keys?: string; sub?: boolean; hot?: boolean } | "-";

const CONTEXT_MENU: Entry[] = [
  { label: "Select", sub: true },
  "-",
  { label: "Move", icon: "move", keys: "M" },
  { label: "Rotate Counterclockwise", icon: "rotateCcw", keys: "R" },
  { label: "Rotate Clockwise", icon: "rotateCw", keys: "Shift+R" },
  { label: "Change Side / Flip", icon: "flip", keys: "F" },
  { label: "Mirror Horizontally", icon: "mirrorH" },
  { label: "Mirror Vertically", icon: "mirrorV" },
  { label: "Properties...", icon: "pencil", keys: "E" },
  "-",
  { label: "Shape Modification", sub: true, hot: true },
  { label: "Positioning Tools", icon: "wand", sub: true },
  "-",
  { label: "Locking", icon: "lock", sub: true },
  { label: "Create from Selection", icon: "create", sub: true },
  { label: "Grouping", icon: "group", sub: true },
  "-",
  { label: "Cut", icon: "cut", keys: "Ctrl+X" },
  { label: "Copy", icon: "copy", keys: "Ctrl+C" },
  { label: "Paste", icon: "paste", keys: "Ctrl+V" },
  { label: "Paste Special...", icon: "pasteSpecial", keys: "Ctrl+Shift+V" },
  { label: "Duplicate", icon: "duplicate", keys: "Ctrl+D" },
  { label: "Delete", icon: "trash", keys: "Delete" },
  "-",
  { label: "Select All", keys: "Ctrl+A" },
  { label: "Unselect All", keys: "Ctrl+Shift+A" },
  "-",
  { label: "Zoom", icon: "zoomMenu", sub: true },
  { label: "Grid", icon: "gridMenu", sub: true },
];

const SHAPE_MENU: Entry[] = [
  { label: "Fillet Lines...", icon: "fillet" },
  { label: "Chamfer Lines...", icon: "chamfer" },
  { label: "Dogbone Corners..." },
  { label: "Move Corner To...", icon: "moveCorner" },
];

const Menu = ({ entries, left, top, width }: { entries: Entry[]; left: number; top: number; width: number }) => (
  <MenuSheet role="menu" $left={left} $top={top} $width={width}>
    {entries.map((e, i) =>
      e === "-" ? (
        <MenuLine key={i} />
      ) : (
        <MenuRow key={i} role="menuitem" $icon={!!e.icon} $hot={e.hot}>
          {e.icon && <Icon name={e.icon} />}
          <RowLabel>{e.label}</RowLabel>
          {e.keys && <RowKeys>{e.keys}</RowKeys>}
          {e.sub && (
            <RowArrow viewBox="0 0 7 10">
              <path d="M1 1 L5.500 5 L1 9" />
            </RowArrow>
          )}
        </MenuRow>
      )
    )}
  </MenuSheet>
);

/* ---------- data ---------- */

const MENUS = ["File", "Edit", "View", "Place", "Route", "Inspect", "Tools", "Preferences", "Help"];

const TOP_TOOLS = [
  "save", "|", "board", "|", "page", "print", "plot", "|", "undo", "redo!", "|", "find", "|", "refresh", "zoomIn", "zoomOut",
  "zoomPage", "zoomObjects", "zoomSelection", "|", "rotateCcw", "rotateCw", "mirrorV", "mirrorH", "group!", "ungroup!", "lock!",
  "unlock!", "|", "footprintEdit", "library", "viewer3d", "|", "updateBoard", "drc", "|", "schematic", "|", "console",
];

const LEFT_TOOLS = [
  "gridDots*", "gridOverride*", "polar", "unitIn", "unitMil", "unitMm*", "cursorCross", "|", "angle", "|", "ratsnest*",
  "ratsnestCurved", "|", "netColors", "contrast", "|", "zoneFilled*", "zoneOutline", "|", "padOutline", "viaOutline",
  "trackOutline", "|", "layers*", "tools",
];

const RIGHT_TOOLS = [
  "arrow*", "localRats", "|", "footprint", "route>", "meander>", "via", "zoneSolid", "hatch", "|", "line", "arc", "rect",
  "circle", "polygon", "bezier", "image", "text", "textbox", "table", "dimension>", "deleteTool", "|", "gridOrigin>", "ruler",
];

const Tools = ({ items, vertical }: { items: string[]; vertical?: boolean }) => (
  <>
    {items.map((item, i) => {
      if (item === "|") return <Divider key={i} $vertical={vertical} />;
      const name = item.replace(/[!*>]/, "");
      return (
        <ToolButton key={i} aria-label={name} $active={item.endsWith("*")} disabled={item.endsWith("!")}>
          <Icon name={name} flyout={item.endsWith(">")} />
        </ToolButton>
      );
    })}
  </>
);

const LAYERS: [string, string][] = [
  ["F.Cu", "#d22f32"],
  ["B.Cu", "#4a80c8"],
  ["F.Adhesive", "#840084"],
  ["B.Adhesive", "#00008a"],
  ["F.Paste", "#b39187"],
  ["B.Paste", "#06a9ab"],
  ["F.Silkscreen", "#f1eda3"],
  ["B.Silkscreen", "#e9b1a8"],
  ["F.Mask", "linear-gradient(135deg, #40205c 50%, #57296e 50%)"],
  ["B.Mask", "linear-gradient(135deg, #075c45 50%, #127855 50%)"],
  ["User.Drawings", "#c1c1c1"],
  ["User.Comments", "#5a93e0"],
  ["User.Eco1", "#b4dccf"],
  ["User.Eco2", "#d6c94e"],
  ["Edge.Cuts", "#d2d3d0"],
  ["Margin", "#fb24e0"],
  ["F.Courtyard", "#fb24e0"],
  ["B.Courtyard", "#26e4fb"],
  ["F.Fab", "#aeaeae"],
  ["B.Fab", "#5b5788"],
  ["User.1", "#c1c1c1"],
  ["User.2", "#5a93e0"],
  ["User.3", "#b4dccf"],
  ["User.4", "#d6c94e"],
];

const HIDDEN_LAYERS = ["F.Fab", "B.Fab"];

const FILTERS = [
  "All items", "Locked items", "Footprints", "Text", "Tracks", "Vias", "Pads", "Graphics", "Zones", "Rule Areas", "Dimensions",
  "Other items",
];

const MESSAGES: [string, string][] = [
  ["Type", "Drawing"],
  ["Shape", "Rectangle"],
  ["Width", "55.0000 mm"],
  ["Height", "37.0000 mm"],
  ["Line Style", "Default"],
  ["Line Width", "0.0500 mm"],
  ["Layer", "Edge.Cuts"],
];

const Eye = ({ open }: { open: boolean }) => (
  <svg viewBox="0 0 17 17" aria-hidden="true">
    {open ? (
      <g>
        <circle cx="8.500" cy="8.500" r="8.300" fill="#505050" />
        <path d="M2 8.500 Q8.500 1.500 15 8.500 Q8.500 15.500 2 8.500 Z" fill="#f0f0f0" />
        <circle cx="8.500" cy="8.500" r="2.800" fill="#505050" />
        <circle cx="8.500" cy="8.500" r="1.200" fill="#d8d8d8" />
      </g>
    ) : (
      <g>
        <circle cx="8.500" cy="8.500" r="8" fill="#b9b9b9" />
        <path d="M3 8.500 Q8.500 3.500 14 8.500 Q8.500 13.500 3 8.500 Z" fill="#eee" />
        <path d="M3.500 14 L14 3.500" stroke="#666" strokeWidth="1.600" />
      </g>
    )}
  </svg>
);

/* ---------- board drawing ---------- */

type LabelProps = { x: number; y: number; size: number; turn?: number; silk?: boolean; children: string };

const BoardLabel = ({ x, y, size, turn = 0, silk, children }: LabelProps) => (
  <text
    transform={`translate(${x} ${y}) rotate(${turn})`}
    textAnchor="middle"
    dominantBaseline="central"
    fontFamily="DejaVu Sans Mono, monospace"
    fontSize={size}
    fill={silk ? SILK : "#f2c3bf"}
    stroke={silk ? SILK : "none"}
  >
    {children}
  </text>
);

const Board = () => (
  <svg role="img" aria-label="Board layout">
    <defs>
      <pattern id="minor" x="222.600" y="130.600" width="21.430" height="21.400" patternUnits="userSpaceOnUse">
        <rect x="10" y="10" width="1.400" height="1.400" fill="#2a3450" />
      </pattern>
      <pattern id="column" x="222.600" y="130.600" width="214.300" height="21.400" patternUnits="userSpaceOnUse">
        <rect x="10" y="10" width="1.600" height="1.600" fill="#7a839e" />
      </pattern>
      <pattern id="row" x="222.600" y="130.600" width="21.430" height="214" patternUnits="userSpaceOnUse">
        <rect x="10" y="10" width="1.600" height="1.600" fill="#7a839e" />
      </pattern>
      <pattern id="ticks" x="222.600" y="138" width="21.430" height="40" patternUnits="userSpaceOnUse">
        <rect x="10" y="0" width="1.400" height="4" fill="#7a7f93" />
      </pattern>
    </defs>
    <g transform="translate(-45 -138)">
      <rect x="45" y="138" width="4000" height="4000" fill="url(#minor)" />
      <rect x="45" y="138" width="4000" height="4000" fill="url(#column)" />
      <rect x="45" y="138" width="4000" height="4000" fill="url(#row)" />
      <rect x="45" y="138" width="4000" height="4" fill="url(#ticks)" />

      <g fill="none" stroke={SILK} strokeWidth="5" strokeLinecap="round">
        <path d="M82 706 V802 M87 1019 V1104 M169 1017 H256 M169 1107 H256 M441 1119 V1140 M711 1119 V1140 M534 1119 H619" />
      </g>
      <BoardLabel x={118} y={752} size={66} turn={-90} silk>D4</BoardLabel>
      <BoardLabel x={38} y={1059} size={66} turn={-90} silk>R4</BoardLabel>
      <BoardLabel x={213} y={1061} size={66} silk>R5</BoardLabel>

      <g fill={COPPER}>
        <rect x="20" y="651" width="57" height="59" />
        <rect x="20" y="797" width="57" height="59" />
        <rect x="20" y="973" width="55" height="51" />
        <rect x="20" y="1100" width="55" height="51" />
        <rect x="122" y="1027" width="51" height="69" />
        <rect x="251" y="1027" width="51" height="69" />
        <rect x="459" y="1052" width="64" height="100" />
        <rect x="630" y="1052" width="64" height="100" />
      </g>
      <g fill="none" stroke={COPPER} strokeWidth="17">
        <path d="M45 676 H577 L662 761 V1060" />
        <path d="M20 771 H105 L212 878 V1180" />
        <path d="M40 850 V980" />
        <path d="M20 1061 H130 M290 1061 H428 L470 1103" />
      </g>

      <g fill="none" stroke="#c22fc4" strokeWidth="2">
        <path d="M20 642 H88 V864 H20 M20 964 H83 V1160 M113 1019 H311 V1105 H113 Z M418 1160 V1041 H735 V1160" />
      </g>

      <path d="M45 569.500 H836 M834 569 H1000" fill="none" stroke="#d5dcd6" strokeWidth="2" />
      <circle cx="770" cy="740" r="61" fill="none" stroke="#d5dce4" strokeWidth="1.800" />

      <BoardLabel x={311} y={676} size={12}>GND</BoardLabel>
      <BoardLabel x={619} y={719} size={12} turn={45}>GND</BoardLabel>
      <BoardLabel x={662} y={933} size={12} turn={-90}>GND</BoardLabel>
      <BoardLabel x={158} y={825} size={13} turn={45}>TX</BoardLabel>
      <BoardLabel x={212} y={1013} size={13} turn={-90}>TX</BoardLabel>
      <BoardLabel x={352} y={1062} size={13}>SWITCH</BoardLabel>
      <BoardLabel x={49} y={697} size={23}>ND</BoardLabel>
      <BoardLabel x={56} y={838} size={13}>04-A)</BoardLabel>
      <BoardLabel x={54} y={1009} size={13}>04-A)</BoardLabel>
      <BoardLabel x={136} y={1061} size={23} turn={-90}>1</BoardLabel>
      <BoardLabel x={162} y={1062} size={15} turn={-90}>PWR_3V3</BoardLabel>
      <BoardLabel x={264} y={1061} size={23} turn={-90}>2</BoardLabel>
      <BoardLabel x={291} y={1062} size={17} turn={-90}>SWITCH</BoardLabel>
      <BoardLabel x={475} y={1104} size={28} turn={-90}>2</BoardLabel>
      <BoardLabel x={508} y={1107} size={28} turn={-90}>SWITCH</BoardLabel>
      <BoardLabel x={646} y={1104} size={28} turn={-90}>1</BoardLabel>
      <BoardLabel x={679} y={1105} size={29} turn={-90}>GND</BoardLabel>
    </g>
  </svg>
);

/* ---------- page ---------- */

const App = () => (
  <Shell>
    <GlobalStyle />
    <TitleBar>
      <AppLogo viewBox="2 2 28 28" aria-hidden="true">{pcbTile}</AppLogo>
      <WindowTitle>chasser led — PCB Editor</WindowTitle>
      <WindowButton aria-label="Minimize">
        <svg viewBox="0 0 16 16"><path d="M2 8 H14" /></svg>
      </WindowButton>
      <WindowButton aria-label="Restore">
        <svg viewBox="0 0 16 16"><path d="M5 4 V3 Q5 2 6 2 H12 Q14 2 14 4 V10 Q14 11 13 11 H12" /><rect x="2" y="5" width="9" height="9" rx="1.500" /></svg>
      </WindowButton>
      <WindowButton aria-label="Close">
        <svg viewBox="0 0 16 16"><path d="M2 2 L14 14 M14 2 L2 14" /></svg>
      </WindowButton>
    </TitleBar>

    <MenuBar>
      {MENUS.map((m) => (
        <MenuBarItem key={m}>{m}</MenuBarItem>
      ))}
    </MenuBar>

    <Toolbar>
      <Tools items={TOP_TOOLS} vertical />
    </Toolbar>

    <OptionsBar>
      <Select label="Track width" value="Track: use netclass width" width={190} />
      <ToolButton aria-label="Automatic track width" $active>
        <Icon name="autoWidth" />
      </ToolButton>
      <Divider $vertical $tight />
      <Select label="Via size" value="Via: use netclass sizes" width={188} />
      <Divider $vertical $tight />
      <Select label="Layer" value="Edge.Cuts" width={158} swatch="#d0d2cd" framed />
      <ToolButton aria-label="Layer pair">
        <Icon name="layerPair" />
      </ToolButton>
      <Divider $vertical $tight />
      <Select label="Grid" value="0.5000 mm (19.69 mils)" width={212} />
      <Divider $vertical $tight />
      <Select label="Zoom" value="Zoom 13.00" width={119} />
    </OptionsBar>

    <Workspace>
      <SideBar>
        <Tools items={LEFT_TOOLS} />
      </SideBar>
      <Canvas>
        <Board />
      </Canvas>
      <SideBar $right>
        <Tools items={RIGHT_TOOLS} />
      </SideBar>
      <Panel>
        <PanelTitle>Appearance</PanelTitle>
        <Tabs role="tablist">
          <Tab role="tab" $selected>Layers</Tab>
          <Tab role="tab">Objects</Tab>
          <Tab role="tab">Nets</Tab>
        </Tabs>
        <LayerList>
          {LAYERS.map(([name, color]) => (
            <LayerRow key={name} $current={name === "Edge.Cuts"}>
              <RowMarker $current={name === "Edge.Cuts"} />
              <Swatch $color={color} />
              <EyeButton aria-label={`Toggle ${name}`}>
                <Eye open={!HIDDEN_LAYERS.includes(name)} />
              </EyeButton>
              {name}
            </LayerRow>
          ))}
        </LayerList>
        <Disclosure>Layer Display Options</Disclosure>
        <Presets>
          <FieldLabel htmlFor="presets">Presets (Ctrl+Tab):</FieldLabel>
          <Select id="presets" label="Presets" value="---" />
          <FieldLabel htmlFor="viewports">Viewports (Shift+Tab):</FieldLabel>
          <Select id="viewports" label="Viewports" value="---" />
        </Presets>
        <PanelTitle $spaced>Selection Filter</PanelTitle>
        <FilterGrid>
          {FILTERS.map((f) => (
            <CheckLabel key={f}>
              <Check type="checkbox" defaultChecked={f !== "Locked items"} />
              {f}
            </CheckLabel>
          ))}
        </FilterGrid>
      </Panel>
    </Workspace>

    <MessageBar>
      {MESSAGES.map(([term, value]) => (
        <div key={term}>
          <dt>{term}</dt>
          <dd>{value}</dd>
        </div>
      ))}
    </MessageBar>

    <StatusBar>
      <StatusCell />
      <StatusCell $lined>Z 11.96</StatusCell>
      <StatusCell $lined>{"X 155.0000  Y 55.0000"}</StatusCell>
      <StatusCell $lined>0.5000</StatusCell>
      <StatusCell $lined>mm</StatusCell>
      <StatusCell $lined>Select item(s)</StatusCell>
      <StatusCell $lined />
    </StatusBar>

    <Menu entries={CONTEXT_MENU} left={872} top={260} width={373} />
    <Menu entries={SHAPE_MENU} left={1240} top={588} width={252} />
  </Shell>
);

export default App;
